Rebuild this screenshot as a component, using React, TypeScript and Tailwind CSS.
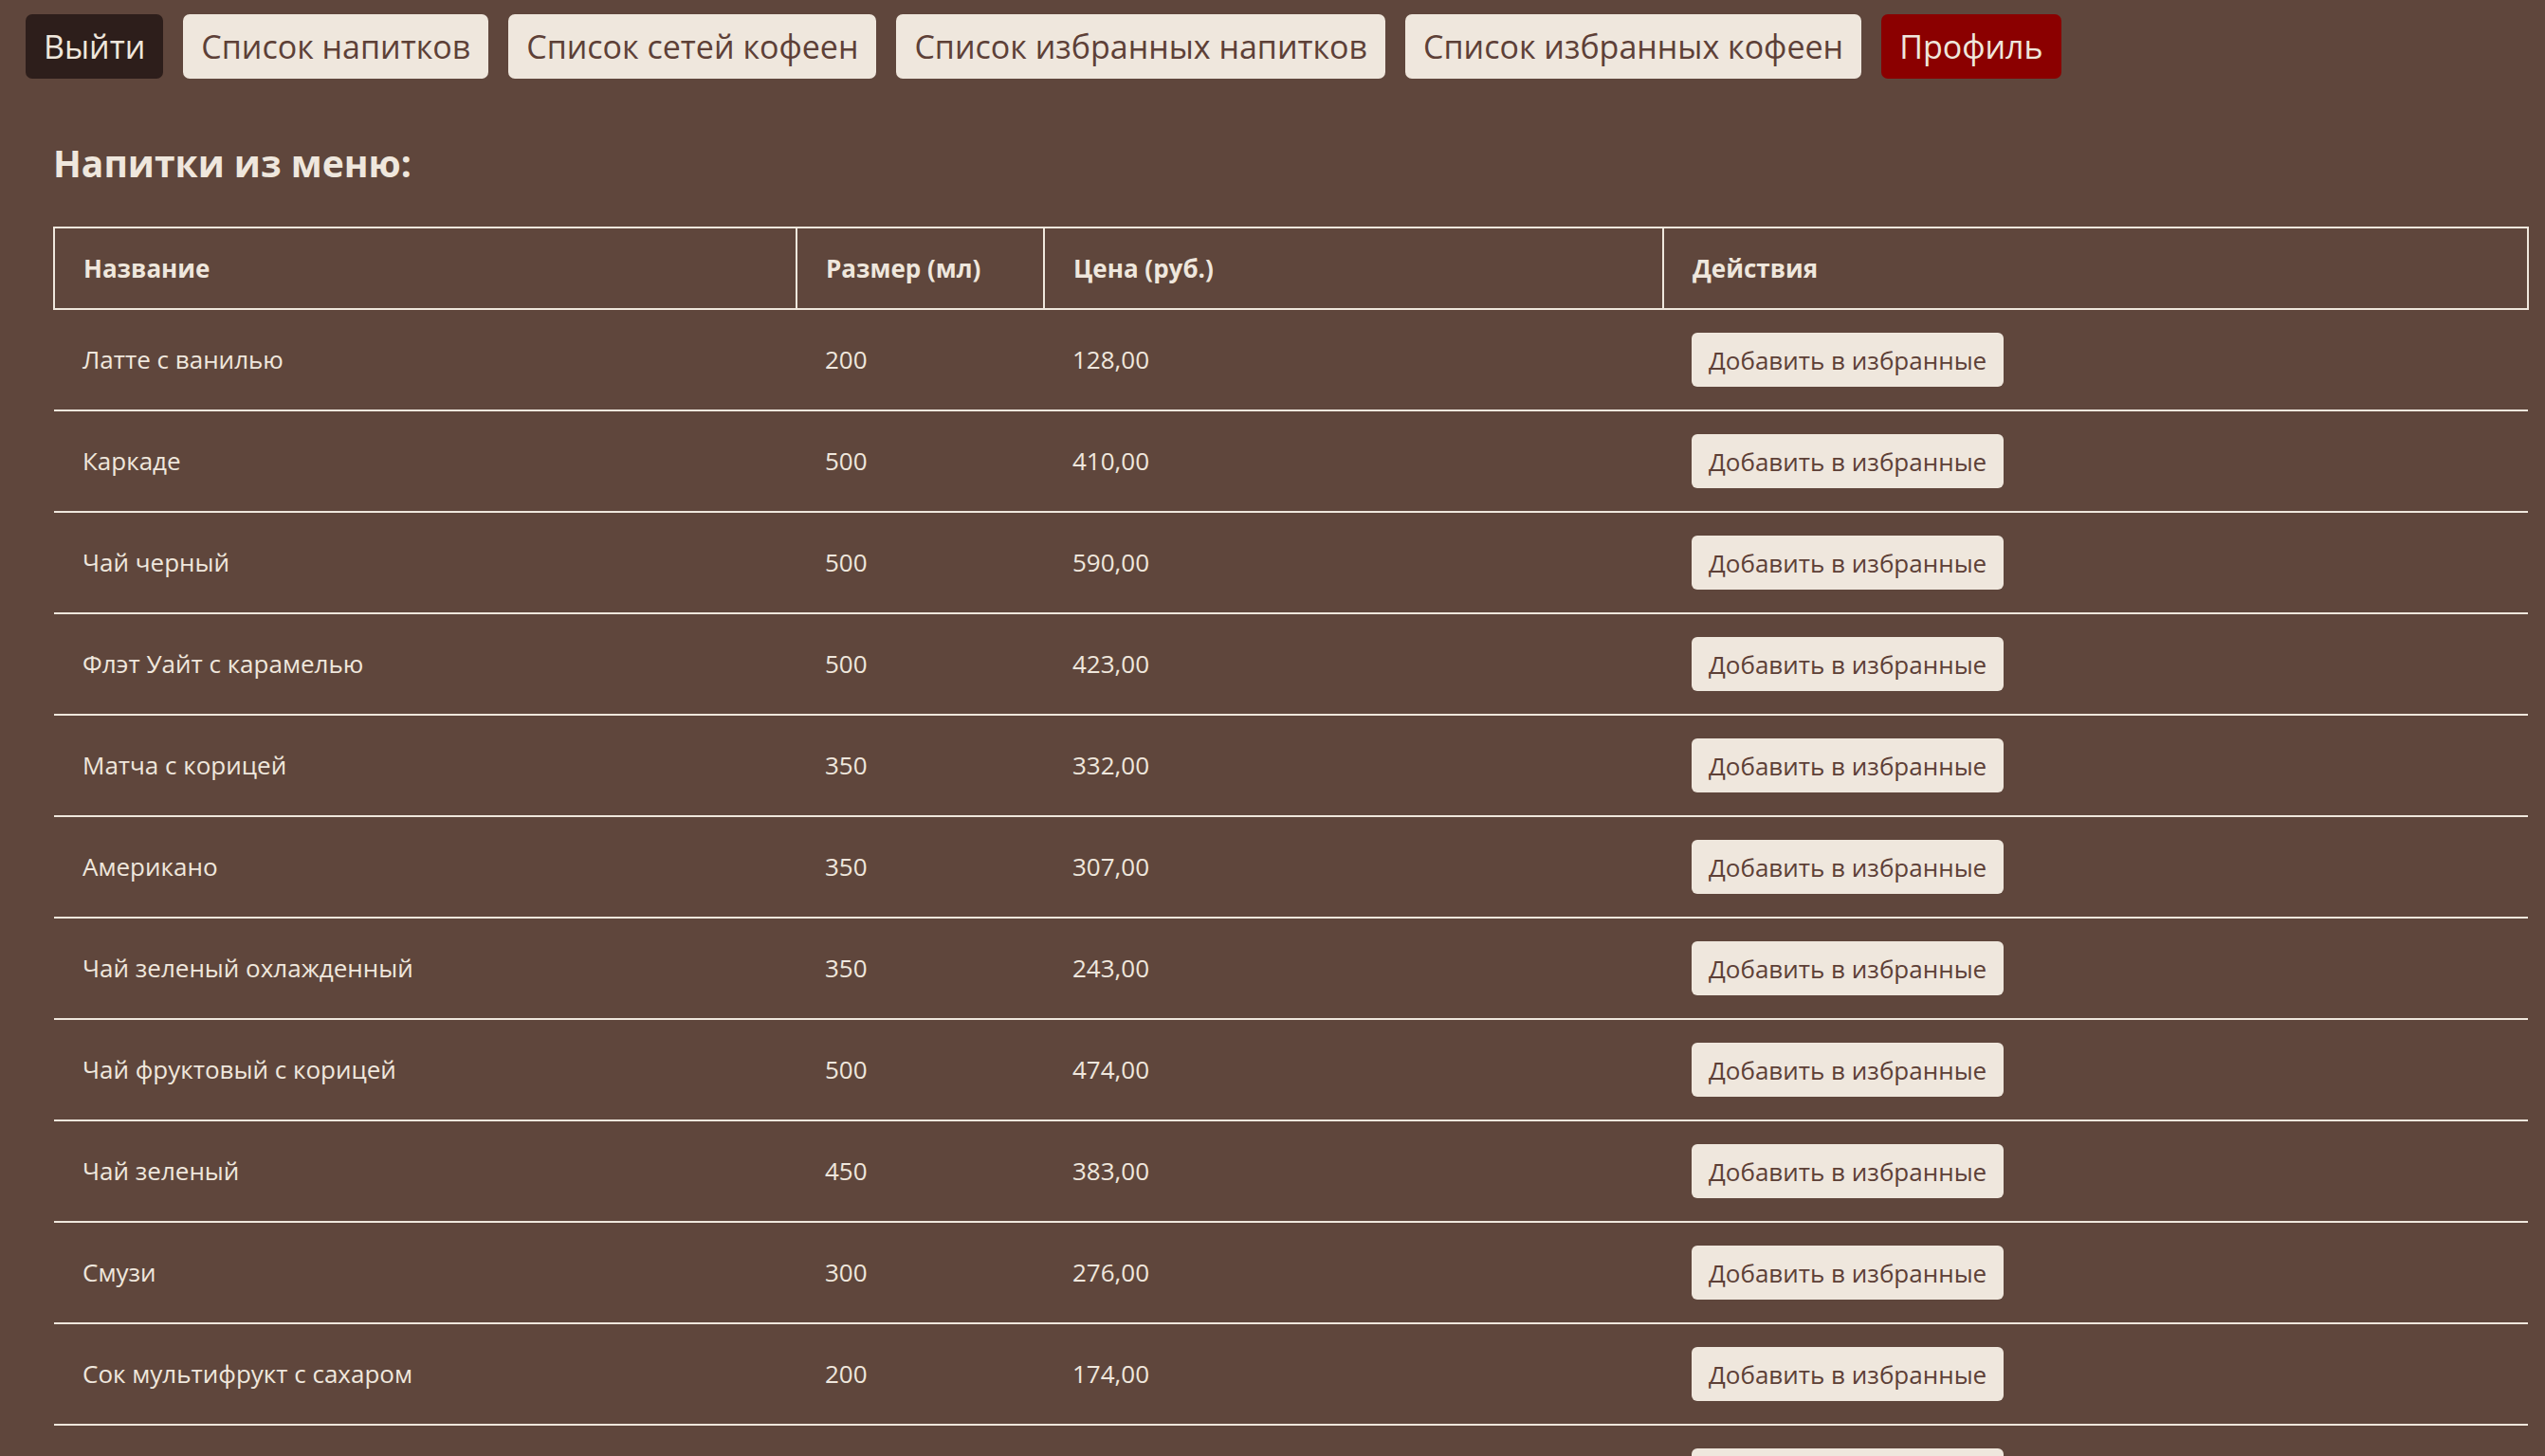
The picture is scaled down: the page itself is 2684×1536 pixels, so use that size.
const NAV = [
  { label: 'Выйти', cls: 'bg-[#2d1e1b] text-[#efe7dd]' },
  { label: 'Список напитков', cls: 'bg-[#efe7dd] text-[#5d4037]' },
  { label: 'Список сетей кофеен', cls: 'bg-[#efe7dd] text-[#5d4037]' },
  { label: 'Список избранных напитков', cls: 'bg-[#efe7dd] text-[#5d4037]' },
  { label: 'Список избранных кофеен', cls: 'bg-[#efe7dd] text-[#5d4037]' },
  { label: 'Профиль', cls: 'bg-[#8b0000] text-[#efe7dd]' },
]

const DRINKS = [
  { name: 'Латте с ванилью', size: 200, price: '128,00' },
  { name: 'Каркаде', size: 500, price: '410,00' },
  { name: 'Чай черный', size: 500, price: '590,00' },
  { name: 'Флэт Уайт с карамелью', size: 500, price: '423,00' },
  { name: 'Матча с корицей', size: 350, price: '332,00' },
  { name: 'Американо', size: 350, price: '307,00' },
  { name: 'Чай зеленый охлажденный', size: 350, price: '243,00' },
  { name: 'Чай фруктовый с корицей', size: 500, price: '474,00' },
  { name: 'Чай зеленый', size: 450, price: '383,00' },
  { name: 'Смузи', size: 300, price: '276,00' },
  { name: 'Сок мультифрукт с сахаром', size: 200, price: '174,00' },
  { name: 'Капучино', size: 300, price: '215,00' },
]

export default function App() {
  return (
    <div className="min-h-screen bg-[#5f463c] text-[#efe7dd] font-['Open_Sans',sans-serif]">
      {/* навигация */}
      <nav className="flex gap-[21px] pl-[27px] pt-[15px]">
        {NAV.map((item) => (
          <button
            key={item.label}
            className={`h-[68px] px-[19px] rounded-[7px] text-[34px] leading-none ${item.cls}`}
          >
            {item.label}
          </button>
        ))}
      </nav>

      <main className="px-[56px] pr-[17px]">
        <h2 className="mt-[63px] mb-[41px] text-[39px] font-bold leading-[52px]">Напитки из меню:</h2>

        <table className="w-[2611px] border-collapse text-[26px] text-left">
          <thead>
            <tr className="h-[86px]">
              <th className="w-[783px] border-2 border-[#efe7dd] pl-[30px] font-bold">Название</th>
              <th className="w-[261px] border-2 border-[#efe7dd] pl-[30px] font-bold">Размер (мл)</th>
              <th className="w-[653px] border-2 border-[#efe7dd] pl-[30px] font-bold">Цена (руб.)</th>
              <th className="border-2 border-[#efe7dd] pl-[30px] font-bold">Действия</th>
            </tr>
          </thead>
          <tbody>
            {DRINKS.map((d) => (
              <tr key={d.name} className="border-b-2 border-[#efe7dd]">
                <td className="pl-[30px] py-[24px]">{d.name}</td>
                <td className="pl-[30px] py-[24px]">{d.size}</td>
                <td className="pl-[30px] py-[24px]">{d.price}</td>
                <td className="pl-[30px] py-[24px]">
                  <button className="h-[57px] px-[18px] rounded-[6px] bg-[#efe7dd] text-[#5d4037] text-[26px] leading-none">
                    Добавить в избранные
                  </button>
                </td>
              </tr>
            ))}
          </tbody>
        </table>
      </main>
    </div>
  )
}
